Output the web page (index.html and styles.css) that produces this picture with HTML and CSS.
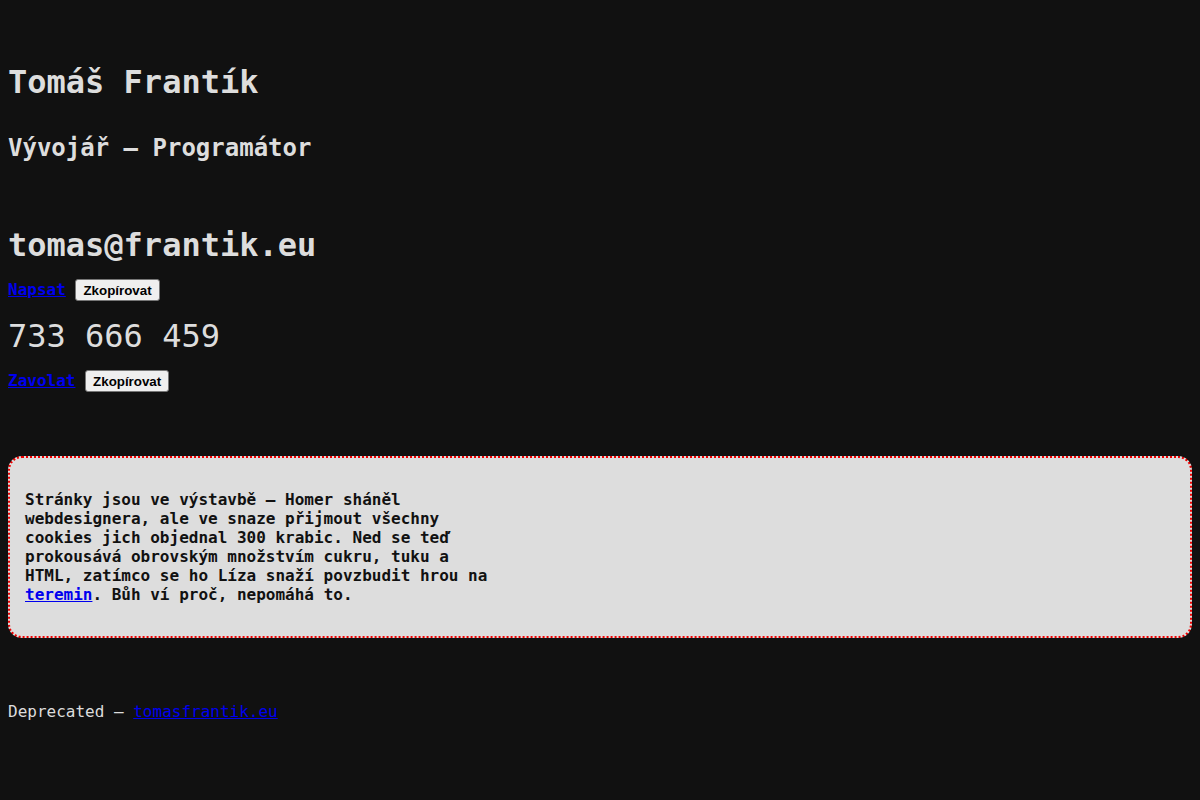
FILE: index.html
```html
<!DOCTYPE html>
<html lang="cs">
<head>
<meta charset="utf-8">
<title>Tomáš Frantík</title>
<link rel="stylesheet" href="styles.css">
</head>
<body>
<header class="header">
  <h1 class="name">Tomáš Frantík</h1>
  <h2 class="role">Vývojář — Programátor</h2>
</header>
<section class="contacts">
  <div class="contact">
    <h2 class="contact-value email">tomas@frantik.eu</h2>
    <p class="contact-actions"><a class="action" href="#">Napsat</a> <button class="copy" type="button">Zkopírovat</button></p>
  </div>
  <div class="contact">
    <p class="contact-value phone">733 666 459</p>
    <p class="contact-actions"><a class="action" href="#">Zavolat</a> <button class="copy" type="button">Zkopírovat</button></p>
  </div>
</section>
<aside class="notice">
  <p class="notice-text">Stránky jsou ve výstavbě — Homer sháněl webdesignera, ale ve snaze přijmout všechny cookies jich objednal 300 krabic. Ned se teď prokousává obrovským množstvím cukru, tuku a HTML, zatímco se ho Líza snaží povzbudit hrou na <a href="#">teremin</a>. Bůh ví proč, nepomáhá to.</p>
</aside>
<footer class="footer">
  <p class="footer-text">Deprecated — <a href="#">tomasfrantik.eu</a></p>
</footer>
</body>
</html>
```

FILE: styles.css
```css
html {
  background: #111111;
}

body {
  margin: 8px;
  color: #dddddd;
  font-family: "DejaVu Sans Mono", monospace;
  font-size: 16px;
}

a {
  color: #0000ee;
  text-decoration: underline;
}

.header {
  padding-top: 34px;
}

.name {
  font-size: 32px;
  font-weight: bold;
  margin: 21px 0 0;
}

.role {
  font-size: 24px;
  font-weight: bold;
  margin: 33px 0 0;
}

.contacts {
  margin-top: 64px;
}

.contact-value {
  font-size: 32px;
  margin: 0;
}

.email {
  font-weight: bold;
}

.phone {
  font-weight: normal;
  margin-top: 16px;
}

.contact-actions {
  margin: 15px 0 0;
  font-weight: bold;
}

.copy {
  font-family: "Liberation Sans", Arial, sans-serif;
  font-size: 13.333px;
  font-weight: bold;
  color: #000;
  background: #efefef;
  border: 1px solid #767676;
  border-radius: 3px;
  padding: 3px 7px 2px;
  vertical-align: baseline;
}

.notice {
  margin-top: 64px;
  background: #dddddd;
  color: #111111;
  border: 2px dotted #ee0000;
  border-radius: 14px;
  padding: 16px 15px;
}

.notice-text {
  margin: 16px 0;
  max-width: 48ch;
  font-weight: bold;
}

.footer {
  margin-top: 64px;
}

.footer-text {
  margin: 0;
}
```
